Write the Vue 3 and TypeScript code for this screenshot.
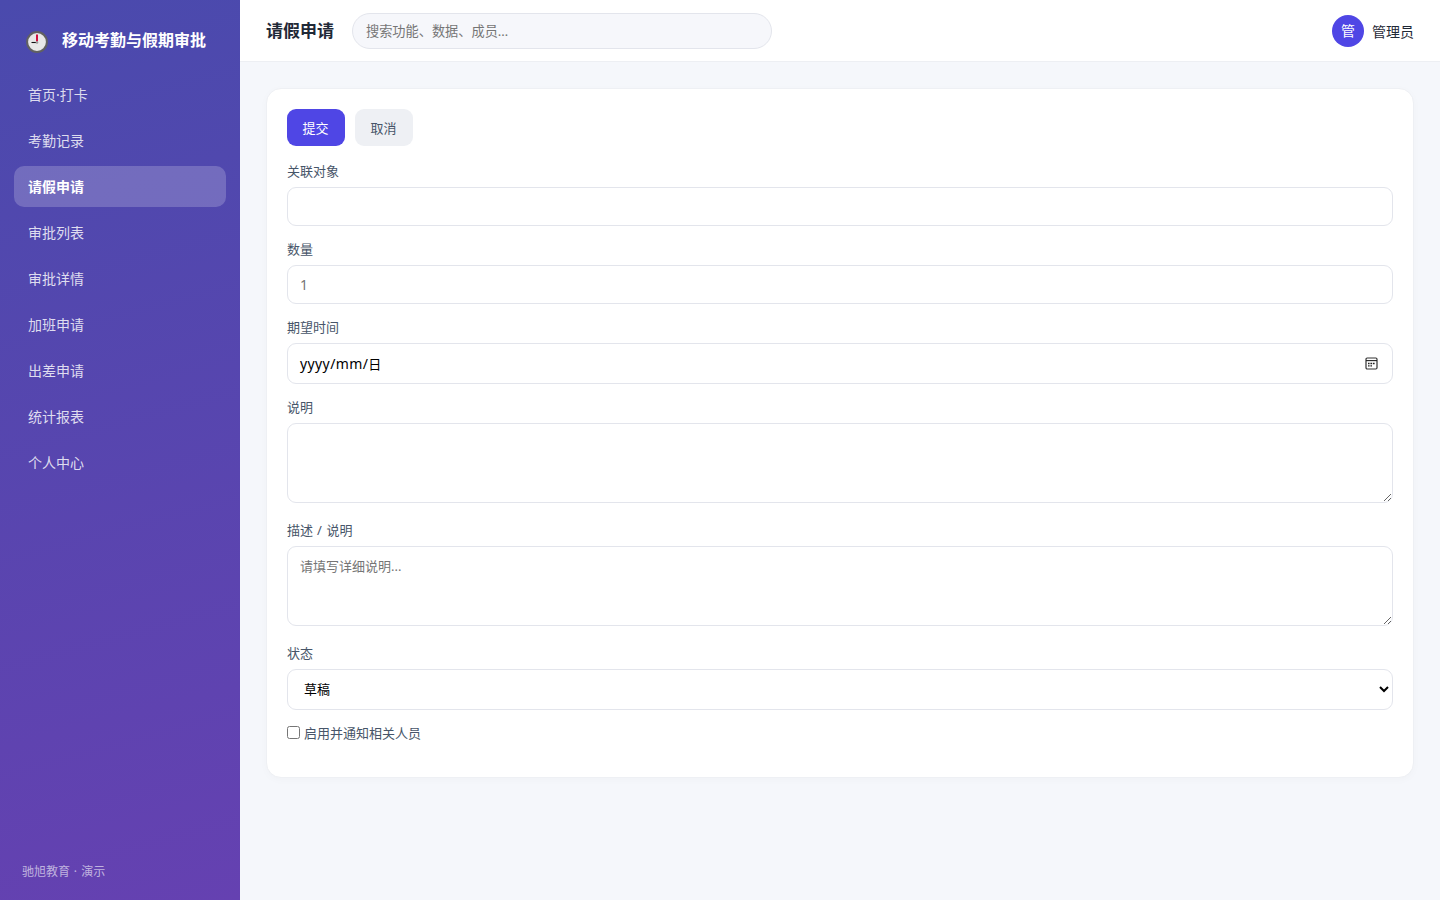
<script setup lang="ts">
import { ref } from 'vue'

const menu: string[] = ['首页·打卡', '考勤记录', '请假申请', '审批列表', '审批详情', '加班申请', '出差申请', '统计报表', '个人中心']
const active = ref('请假申请')
const keyword = ref('')
const target = ref('')
const amount = ref('')
const note = ref('')
const detail = ref('')
const status = ref('草稿')
const notify = ref(false)
</script>

<template>
  <div class="layout">
    <aside class="sidebar">
      <div class="brand">
        <svg class="clock" viewBox="0 0 22 22">
          <circle cx="11" cy="11" r="9.9" fill="#e8e8e8" stroke="#616161" stroke-width="2" />
          <path d="M11 3.6v7" stroke="#d0103f" stroke-width="2" />
          <path d="M5.5 11.5H10" stroke="#111" stroke-width="1.1" />
          <circle cx="11" cy="11.5" r="1.3" fill="#9a9a9a" />
        </svg>
        <span>移动考勤与假期审批</span>
      </div>
      <nav>
        <a v-for="item in menu" :key="item" class="item" :class="{ active: item === active }" @click="active = item">{{ item }}</a>
      </nav>
      <div class="foot">驰旭教育<span class="dot"> · </span>演示</div>
    </aside>
    <div class="main">
      <header>
        <h1>{{ active }}</h1>
        <input v-model="keyword" class="search" placeholder="搜索功能、数据、成员…" />
        <div class="user"><span class="avatar">管</span><span>管理员</span></div>
      </header>
      <section class="card">
        <div class="actions">
          <button class="primary">提交</button>
          <button>取消</button>
        </div>
        <div class="field">
          <label>关联对象</label>
          <input v-model="target" class="control" />
        </div>
        <div class="field">
          <label>数量</label>
          <input v-model="amount" class="control amount" placeholder="1" />
        </div>
        <div class="field">
          <label>期望时间</label>
          <div class="control date">
            <span><span class="date-text">yyyy/mm/</span>日</span>
            <svg width="13" height="13" viewBox="0 0 13 13">
              <rect x="1" y="1" width="11" height="11" rx="1.2" fill="none" stroke="#333" stroke-width="1.2" />
              <path d="M1 3.6h11" stroke="#222" stroke-width="1.1" />
              <path d="M3 6.5h1.6M5.4 6.5H7M7.8 6.5h1.8M3 8.9h1.6M5.4 8.9H7" stroke="#222" stroke-width="1.4" />
            </svg>
          </div>
        </div>
        <div class="field area">
          <label>说明</label>
          <textarea v-model="note" class="control"></textarea>
        </div>
        <div class="field area">
          <label>描述<span class="dot"> / </span>说明</label>
          <textarea v-model="detail" class="control" placeholder="请填写详细说明..."></textarea>
        </div>
        <div class="field">
          <label>状态</label>
          <select v-model="status" class="control"><option>草稿</option></select>
        </div>
        <label class="check"><input v-model="notify" type="checkbox" /><span>启用并通知相关人员</span></label>
      </section>
    </div>
  </div>
</template>

<style>
body { margin: 0; }
</style>

<style scoped>
* { box-sizing: border-box; }
.layout { display: flex; height: 900px; overflow: hidden; background: #f5f7fb; color: #1f2937; font-family: "Noto Sans", "Noto Sans CJK SC", sans-serif; font-size: 14px; }
.sidebar { display: flex; flex-direction: column; width: 240px; padding: 22px 14px 18px; background: linear-gradient(165deg, #4a4aad, #6541b1); color: #fff; }
.brand { display: flex; align-items: center; gap: 14px; height: 36px; margin-bottom: 2px; padding-left: 12px; font-size: 16px; font-weight: 700; line-height: 24px; white-space: nowrap; }
.clock { width: 22px; height: 22px; margin-top: 4px; }
nav { display: flex; flex-direction: column; gap: 4.9px; margin-top: 14.4px; }
.item { height: 41px; padding-left: 14px; border-radius: 10px; line-height: 41px; color: rgba(255, 255, 255, .82); cursor: pointer; }
.item.active { background: rgba(255, 255, 255, .2); color: #fff; font-weight: 700; }
.foot { margin-top: auto; padding-left: 8px; font-size: 12px; line-height: 20px; color: rgba(255, 255, 255, .6); }
.dot { letter-spacing: .6px; }
.main { flex: 1; min-width: 0; }
header { display: flex; align-items: center; height: 62px; padding: 0 26px; background: #fff; border-bottom: 1px solid #edeff3; }
h1 { margin: 0 18px 0 0; font-size: 17px; line-height: 24px; font-weight: 700; }
.search { width: 420px; height: 36px; padding: 0 13px; border: 1px solid #e3e5ec; border-radius: 18px; outline: 0; background: #f6f7fb; font: 13.2px "Noto Sans", "Noto Sans CJK SC", sans-serif; }
.search::placeholder, .control::placeholder { color: #757575; }
.user { display: flex; align-items: center; gap: 8px; margin-left: auto; }
.avatar { width: 32px; height: 32px; border-radius: 50%; background: #4f46e5; color: #fff; line-height: 32px; text-align: center; }
.card { height: 690px; margin: 26px; padding: 20px; border: 1px solid #eef0f4; border-radius: 15px; background: #fff; box-shadow: 0 2px 8px rgba(30, 41, 59, .025); }
.actions { display: flex; gap: 10px; margin-bottom: 15px; }
button { width: 58px; height: 37px; padding: 0 1px 1px 0; border: 0; border-radius: 9px; background: #eef0f4; color: #475569; font: 13px "Noto Sans", "Noto Sans CJK SC", sans-serif; }
button.primary { background: #4f46e5; color: #fff; }
.field { display: flex; flex-direction: column; margin-bottom: 13px; }
.field.area { margin-bottom: 17px; }
label { height: 20px; margin-bottom: 6px; color: #475569; font-size: 13px; line-height: 21px; }
.control { width: 100%; height: 39px; padding: 0 12px; border: 1px solid #e3e5ec; border-radius: 9px; outline: 0; background: #fff; color: #000; font: 13px "Noto Sans", "Noto Sans CJK SC", sans-serif; }
.amount { font-size: 14px; }
.date { display: flex; align-items: center; justify-content: space-between; height: 41px; padding-right: 14px; }
.date-text { font-size: 14px; letter-spacing: .4px; }
textarea.control { display: block; height: 80px; padding-top: 9px; resize: vertical; }
select.control { height: 41px; padding-bottom: 1px; }
.check { display: flex; align-items: flex-start; gap: 4px; margin: 0; }
.check input { width: 13px; height: 13px; margin: 3px 0 0; }
</style>
